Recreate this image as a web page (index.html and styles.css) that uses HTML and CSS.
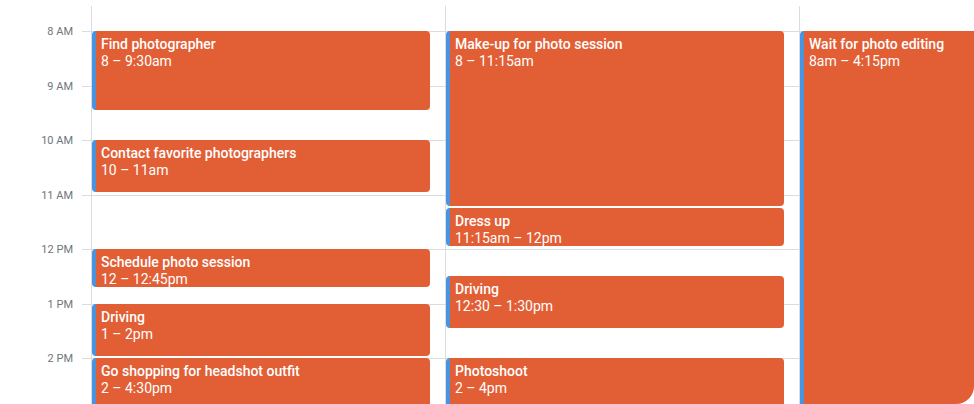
FILE: index.html
```html
<!DOCTYPE html>
<html lang="en">
<head>
<meta charset="utf-8">
<title>Calendar</title>
<link rel="stylesheet" href="styles.css">
</head>
<body>
<div class="calendar">
  <div class="gutter">
    <div class="hour"><span class="hour-label">8 AM</span><span class="tick"></span></div>
    <div class="hour"><span class="hour-label">9 AM</span><span class="tick"></span></div>
    <div class="hour"><span class="hour-label">10 AM</span><span class="tick"></span></div>
    <div class="hour"><span class="hour-label">11 AM</span><span class="tick"></span></div>
    <div class="hour"><span class="hour-label">12 PM</span><span class="tick"></span></div>
    <div class="hour"><span class="hour-label">1 PM</span><span class="tick"></span></div>
    <div class="hour"><span class="hour-label">2 PM</span><span class="tick"></span></div>
  </div>

  <div class="day">
    <div class="slot"></div><div class="slot"></div><div class="slot"></div><div class="slot"></div>
    <div class="slot"></div><div class="slot"></div><div class="slot"></div><div class="slot"></div>
    <div class="event" style="top:25px;height:79.25px"><div class="title">Find photographer</div><div class="time">8 – 9:30am</div></div>
    <div class="event" style="top:134px;height:52px"><div class="title">Contact favorite photographers</div><div class="time">10 – 11am</div></div>
    <div class="event" style="top:243px;height:38.4px"><div class="title">Schedule photo session</div><div class="time">12 – 12:45pm</div></div>
    <div class="event" style="top:297.5px;height:52px"><div class="title">Driving</div><div class="time">1 – 2pm</div></div>
    <div class="event" style="top:352px;height:133.75px"><div class="title">Go shopping for headshot outfit</div><div class="time">2 – 4:30pm</div></div>
  </div>

  <div class="day">
    <div class="slot"></div><div class="slot"></div><div class="slot"></div><div class="slot"></div>
    <div class="slot"></div><div class="slot"></div><div class="slot"></div><div class="slot"></div>
    <div class="event" style="top:25px;height:174.6px"><div class="title">Make-up for photo session</div><div class="time">8 – 11:15am</div></div>
    <div class="event" style="top:202.1px;height:38.4px"><div class="title">Dress up</div><div class="time">11:15am – 12pm</div></div>
    <div class="event" style="top:270.25px;height:52px"><div class="title">Driving</div><div class="time">12:30 – 1:30pm</div></div>
    <div class="event" style="top:352px;height:106.5px"><div class="title">Photoshoot</div><div class="time">2 – 4pm</div></div>
  </div>

  <div class="day">
    <div class="slot"></div><div class="slot"></div><div class="slot"></div><div class="slot"></div>
    <div class="slot"></div><div class="slot"></div><div class="slot"></div><div class="slot"></div>
    <div class="event" style="top:25px;height:447px"><div class="title">Wait for photo editing</div><div class="time">8am – 4:15pm</div></div>
  </div>
</div>
</body>
</html>
```

FILE: styles.css
```css
* {
  box-sizing: border-box;
}

html, body {
  margin: 0;
  padding: 0;
  background: #ffffff;
}

body {
  font-family: Roboto, "Liberation Sans", Arial, sans-serif;
}

.calendar {
  display: flex;
  width: 974px;
  height: 404px;
  padding-top: 6px;
  overflow: hidden;
  border-bottom-right-radius: 18px;
  background: #ffffff;
}

.gutter {
  flex: 0 0 91px;
  padding-top: 25px;
}

.hour {
  height: 54.5px;
  display: flex;
  justify-content: flex-end;
  align-items: flex-start;
}

.hour-label {
  font-size: 11px;
  line-height: 14px;
  color: #70757a;
  margin-top: -6px;
  margin-right: 9px;
  white-space: nowrap;
}

.tick {
  width: 9px;
  border-top: 1px solid #dadce0;
}

.day {
  flex: 0 0 354px;
  position: relative;
  border-left: 1px solid #dadce0;
  padding-top: 25px;
}

.slot {
  height: 54.5px;
  border-top: 1px solid #dadce0;
}

.event {
  position: absolute;
  left: 0;
  right: 15px;
  background: #e25e34;
  border-left: 4px solid #4a93df;
  border-radius: 4px;
  padding: 5px 5px 0 5px;
  color: #ffffff;
  font-size: 14px;
  line-height: 17px;
  overflow: hidden;
}

.title {
  font-weight: 500;
  white-space: nowrap;
  overflow: hidden;
  text-overflow: ellipsis;
}

.time {
  font-weight: 400;
  white-space: nowrap;
}
```
